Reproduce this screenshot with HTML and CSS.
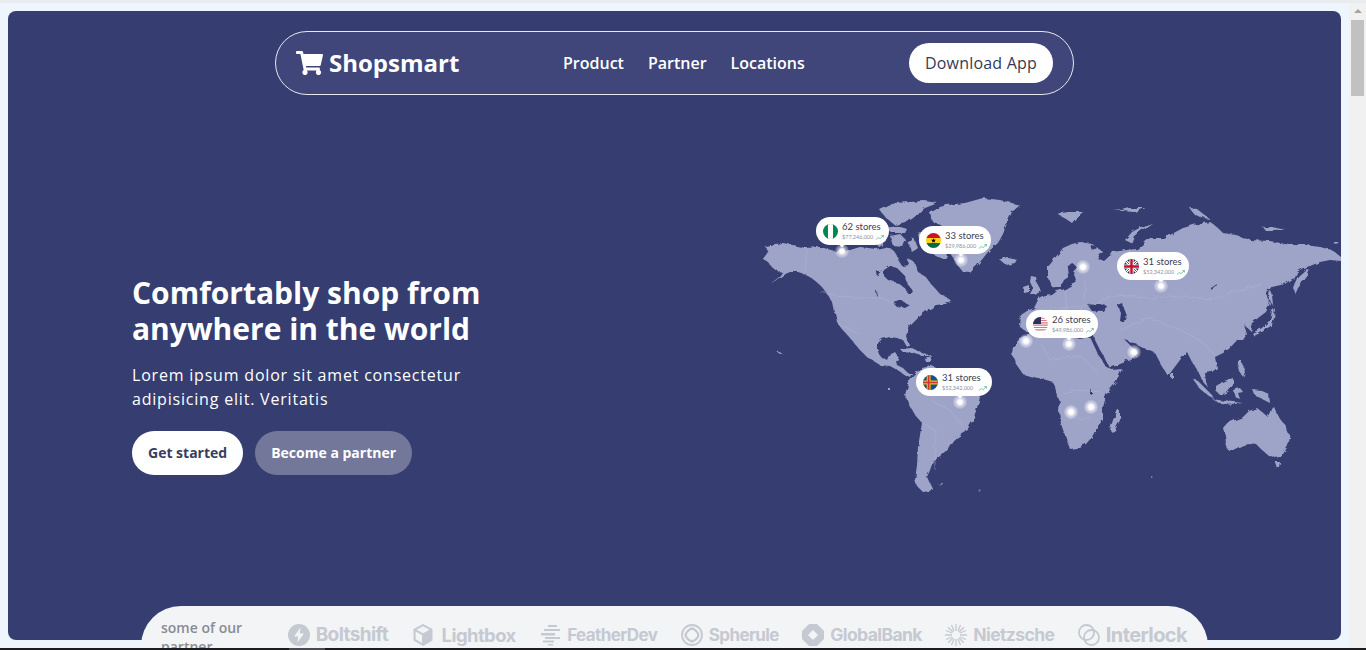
FILE: index.html
```html
<!DOCTYPE html>
<html lang="en">
<head>
    <title>Shopsmart</title>
    <meta charset="UTF-8">
    <meta name="viewport" content="width=device-width, initial-scale=1.0">
    <link rel="stylesheet" href="styles.css">
</head>
<body>
    <div class="page">
        <main class="hero">
            <nav class="navbar">
                <a href="#" class="logo">
                    <svg class="cart" viewBox="0 0 576 512"><path fill="#fff" d="M528.12 301.319l47.273-208C578.806 78.301 567.391 64 551.99 64H159.208l-9.166-44.81C147.758 8.021 137.93 0 126.529 0H24C10.745 0 0 10.745 0 24v16c0 13.255 10.745 24 24 24h69.883l70.248 343.435C147.325 417.1 136 435.222 136 456c0 30.928 25.072 56 56 56s56-25.072 56-56c0-15.674-6.447-29.835-16.824-40h209.647C430.447 426.165 424 440.326 424 456c0 30.928 25.072 56 56 56s56-25.072 56-56c0-22.172-12.888-41.332-31.579-50.405l5.517-24.276c3.413-15.018-8.002-29.319-23.403-29.319H218.117l-6.545-32h293.145c11.206 0 20.92-7.754 23.403-18.681z"/></svg>
                    <span>Shopsmart</span>
                </a>
                <div class="nav-links">
                    <a href="#">Product</a>
                    <a href="#">Partner</a>
                    <a href="#">Locations</a>
                </div>
                <a href="#" class="download">Download App</a>
            </nav>

            <section class="hero-body">
                <div class="hero-copy">
                    <h1>Comfortably shop from anywhere in the world</h1>
                    <p>Lorem ipsum dolor sit amet consectetur adipisicing elit. Veritatis</p>
                    <div class="hero-actions">
                        <a href="#" class="btn btn-white">Get started</a>
                        <a href="#" class="btn btn-muted">Become a partner</a>
                    </div>
                </div>

                <div class="map">
                    <svg class="world" viewBox="760 190 581 310" width="581" height="310">
                        <defs>
                            <filter id="coast" x="-2%" y="-2%" width="104%" height="104%">
                                <feTurbulence type="fractalNoise" baseFrequency="0.14" numOctaves="3" seed="7"/>
                                <feDisplacementMap in="SourceGraphic" scale="4.5"/>
                            </filter>
                        </defs>
                        <g class="coast">
                        <g class="land">
                            <!-- north america -->
                            <path d="M763 259L768 252 765 246 775 244 783 243 806 248 820 247 835 251 850 250 860 247 876 249 885 247 893 250 898 258 906 258 914 262 918 272 925 276 932 285 940 294 948 298 952 302 945 304 936 305 930 309 925 312 918 318 912 324 908 330 906 336 909 345 907 347 903 340 897 338 890 337 882 339 878 343 878 352 881 357 888 361 891 354 895 352 898 356 895 361 897 365 903 368 908 373 912 373 910 377 905 375 899 371 890 366 880 365 867 357 858 348 850 338 841 328 837 322 833 303 826 292 821 286 813 279 807 275 798 272 790 272 783 275 775 281 770 284 778 278 782 272 775 270 771 266 768 262Z"/>
                            <!-- greenland and arctic islands -->
                            <path d="M930 213L940 207 947 205 965 203 983 198 1000 200 1020 205 1012 212 1007 223 1003 234 998 243 988 252 980 262 970 273 963 272 958 266 950 253 948 244 945 233 940 224 933 222Z"/>
                            <path d="M880 210L895 203 925 201 938 203 925 208 915 215 905 222 895 225 885 217Z"/>
                            <path d="M917 233L926 231 935 235 942 244 948 256 946 260 936 256 926 248 921 241Z"/>
                            <path d="M885 228L897 226 907 229 905 233 892 233Z"/>
                            <path d="M890 236L900 234 906 240 903 247 893 246Z"/>
                            <path d="M873 238L884 234 886 241 878 246Z"/>
                            <path d="M907 241L914 238 918 248 912 252Z"/>
                            <!-- caribbean -->
                            <path d="M900 349L912 348 922 353 930 356 922 356 912 353 903 352Z"/>
                            <path d="M924 358L932 356 931 361 925 361Z"/>
                            <!-- south america -->
                            <path d="M905 395L908 385 913 375 922 368 932 366 945 372 958 378 970 385 980 397 977 408 973 420 966 432 953 440 947 450 940 456 933 462 930 470 927 477 932 488 930 491 923 492 917 486 915 480 917 465 918 447 920 435 922 423 916 416 910 407Z"/>
                            <!-- iceland, britain, ireland -->
                            <path d="M1000 260L1007 257 1017 259 1015 263 1006 265Z"/>
                            <path d="M1031 276L1036 277 1037 284 1041 291 1035 295 1030 294 1033 288 1030 282Z"/>
                            <path d="M1023 287L1029 285 1029 292 1024 293Z"/>
                            <!-- scandinavia and eurasia -->
                            <path d="M1048 267L1055 258 1063 248 1072 244 1080 242 1092 244 1103 252 1097 258 1104 261 1111 255 1113 252 1127 250 1137 249 1150 238 1163 238 1170 235 1183 228 1197 224 1210 222 1218 228 1223 233 1236 235 1250 240 1270 241 1290 245 1305 245 1320 247 1332 250 1341 257 1341 261 1330 260 1320 262 1310 266 1303 268 1297 272 1295 278 1290 280 1285 284 1272 287 1266 292 1270 303 1266 312 1258 318 1252 323 1250 330 1245 326 1243 322 1247 334 1243 340 1237 340 1230 348 1223 353 1215 357 1217 368 1212 372 1205 373 1206 382 1209 388 1203 382 1198 371 1192 362 1187 352 1180 360 1174 368 1168 376 1162 366 1155 353 1148 350 1142 347 1134 343 1125 340 1134 349 1138 353 1131 360 1120 364 1110 368 1106 360 1100 350 1095 340 1091 331 1082 328 1076 325 1068 322 1060 325 1052 320 1045 322 1040 330 1028 332 1020 327 1021 315 1027 311 1034 308 1038 300 1045 296 1052 295 1057 291 1065 289 1070 286 1073 279 1070 276 1064 280 1060 288 1052 287 1048 278Z"/>
                            <!-- africa -->
                            <path d="M1013 347L1020 338 1030 333 1046 331 1056 334 1068 336 1080 339 1090 337 1097 352 1105 366 1112 370 1122 369 1116 382 1106 395 1103 408 1103 420 1097 427 1092 437 1086 444 1076 448 1070 449 1066 438 1061 424 1059 412 1060 402 1055 390 1053 382 1043 379 1033 377 1023 374 1016 364 1012 354Z"/>
                            <path d="M1110 430L1113 420 1118 410 1120 410 1120 420 1115 430 1112 432Z"/>
                            <!-- australia -->
                            <path d="M1223 428L1226 424 1235 420 1243 417 1249 411 1257 408 1262 412 1268 417 1271 408 1273 406 1278 416 1285 425 1290 437 1288 446 1282 456 1276 458 1268 455 1262 450 1257 445 1250 444 1243 445 1235 449 1228 450 1226 443 1225 435Z"/>
                            <path d="M1275 462L1280 462 1279 467 1277 468Z"/>
                            <!-- south east asia -->
                            <path d="M1193 379L1198 381 1205 388 1212 395 1214 399 1208 395 1200 389Z"/>
                            <path d="M1212 399L1225 401 1243 403 1235 404 1220 403Z"/>
                            <path d="M1216 386L1224 381 1233 378 1233 385 1228 392 1220 395 1216 391Z"/>
                            <path d="M1233 390L1240 388 1243 392 1238 393 1240 399 1235 397Z"/>
                            <path d="M1253 390L1262 391 1269 394 1270 403 1262 399 1255 395Z"/>
                            <path d="M1237 360L1241 360 1245 372 1243 377 1240 372Z"/>
                            <path d="M1171 373L1174 373 1174 378 1171 378Z"/>
                            <!-- japan, kamchatka, sakhalin -->
                            <path d="M1252 333L1262 328 1270 320 1272 311 1275 308 1274 318 1272 325 1262 332 1254 336Z"/>
                            <path d="M1270 290L1272 295 1273 305 1271 303 1269 296Z"/>
                            <path d="M1294 285L1298 276 1306 269 1310 270 1306 278 1298 288 1295 295Z"/>
                            <!-- high arctic -->
                            <path d="M1125 240L1132 232 1143 226 1152 223 1142 230 1134 236 1131 243Z"/>
                            <path d="M1057 214L1068 212 1083 212 1076 218 1072 223 1066 219Z"/>
                            <path d="M1113 209L1122 210 1130 208 1146 208 1134 212 1122 211Z"/>
                            <path d="M1190 208L1197 209 1203 214 1210 219 1202 218 1194 214Z"/>
                            <path d="M1263 227L1272 227 1286 230 1275 231 1266 231Z"/>
                            <path d="M1332 242L1339 242 1336 244Z"/>
                            <!-- specks -->
                            <path d="M775 350L778 351 784 355 780 354Z"/>
                            <path d="M938 484L943 483 942 485Z"/>
                            <path d="M977 489L981 490 979 491Z"/>
                            <path d="M1151 477L1154 478 1152 479Z"/>
                            <path d="M888 388L890 388 890 390 888 390Z"/>
                        </g>
                        <g class="water">
                            <!-- hudson bay and inland seas -->
                            <path d="M884 270L890 266 897 268 905 276 908 284 913 292 908 294 905 288 898 283 888 280 884 276Z"/>
                            <path d="M897 258L906 258 910 265 902 266Z"/>
                            <path d="M876 272L882 270 877 276Z"/>
                            <path d="M876 291L877 291 878 297 877 296Z"/>
                            <path d="M892 302L900 300 910 305 905 308 896 306Z"/>
                            <path d="M1067 267L1072 263 1077 267 1073 272 1076 283 1070 286 1068 276Z"/>
                            <path d="M1087 304L1096 303 1107 306 1104 312 1092 311Z"/>
                            <path d="M1117 305L1122 303 1127 316 1125 323 1120 321 1121 313Z"/>
                            <path d="M1211 288L1217 284 1216 287 1212 291Z"/>
                            <path d="M1091 245L1098 247 1097 250 1090 249Z"/>
                            <path d="M1090 390L1092 389 1092 395 1090 394Z"/>
                        </g>
                        <g class="borders">
                            <path d="M806 248L806 272M820 292L850 298 880 298 895 303M838 324L860 334M1040 310L1060 308 1090 305 1115 295 1150 298 1185 296 1210 300 1238 290 1262 284M1065 290L1068 322M1085 280L1082 328M1120 330L1150 318 1180 330 1200 340 1215 355M1042 345L1050 360 1080 356 1098 372M1060 395L1080 390 1100 392M1064 420L1090 418M930 400L950 410 962 425M922 423L935 430 935 470"/>
                        </g>
                        </g>
                    </svg>

                    <div class="glow glow-a"></div>
                    <div class="glow glow-b"></div>
                    <div class="glow glow-c"></div>
                    <div class="glow glow-d"></div>
                    <div class="glow glow-e"></div>

                    <div class="pin pin-ng">
                        <svg class="flag" viewBox="0 0 16 16"><rect width="16" height="16" fill="#008751"/><rect x="5.3" width="5.4" height="16" fill="#fff"/></svg>
                        <div class="pin-text">
                            <b>62 stores</b>
                            <small>$77,246,000 <svg class="trend" viewBox="0 0 10 6"><path d="M0 5.5L3 3 5 4.5 9 1M6.5 .6H9.500V3"/></svg></small>
                        </div>
                    </div>
                    <div class="pin pin-gh">
                        <svg class="flag" viewBox="0 0 16 16"><rect width="16" height="5.400" fill="#ce1126"/><rect y="5.300" width="16" height="5.400" fill="#fcd116"/><rect y="10.700" width="16" height="5.300" fill="#006b3f"/><path d="M8 5.500L8.700 7.300 10.500 7.300 9.100 8.500 9.600 10.400 8 9.300 6.400 10.400 6.900 8.500 5.500 7.300 7.300 7.300Z"/></svg>
                        <div class="pin-text">
                            <b>33 stores</b>
                            <small>$29,986,000 <svg class="trend" viewBox="0 0 10 6"><path d="M0 5.5L3 3 5 4.5 9 1M6.5 .6H9.500V3"/></svg></small>
                        </div>
                    </div>
                    <div class="pin pin-uk">
                        <svg class="flag" viewBox="0 0 16 16"><rect width="16" height="16" fill="#2b2f5e"/><path d="M0 0L16 16M16 0L0 16" stroke="#fff" stroke-width="3"/><path d="M0 0L16 16M16 0L0 16" stroke="#c8102e" stroke-width="1"/><path d="M8 0V16M0 8H16" stroke="#fff" stroke-width="4.500"/><path d="M8 0V16M0 8H16" stroke="#c8102e" stroke-width="2.600"/></svg>
                        <div class="pin-text">
                            <b>31 stores</b>
                            <small>$52,342,000 <svg class="trend" viewBox="0 0 10 6"><path d="M0 5.5L3 3 5 4.5 9 1M6.5 .6H9.500V3"/></svg></small>
                        </div>
                    </div>
                    <div class="pin pin-us">
                        <svg class="flag" viewBox="0 0 16 16"><rect width="16" height="16" fill="#fff"/><path d="M0 1.200H16M0 3.700H16M0 6.200H16M0 8.700H16M0 11.200H16M0 13.700H16" stroke="#d9767f" stroke-width="1.200"/><rect width="8.500" height="7.500" fill="#27345f"/></svg>
                        <div class="pin-text">
                            <b>26 stores</b>
                            <small>$49,986,000 <svg class="trend" viewBox="0 0 10 6"><path d="M0 5.5L3 3 5 4.5 9 1M6.5 .6H9.500V3"/></svg></small>
                        </div>
                    </div>
                    <div class="pin pin-ax">
                        <svg class="flag" viewBox="0 0 16 16"><rect width="16" height="16" fill="#14508f"/><path d="M6 0V16M0 8H16" stroke="#f2c200" stroke-width="4.200"/><path d="M6 0V16M0 8H16" stroke="#d6332a" stroke-width="1.800"/></svg>
                        <div class="pin-text">
                            <b>31 stores</b>
                            <small>$52,342,000 &nbsp;<svg class="trend" viewBox="0 0 10 6"><path d="M0 5.5L3 3 5 4.5 9 1M6.5 .6H9.500V3"/></svg></small>
                        </div>
                    </div>
                </div>
            </section>

            <section class="partners">
                <div class="partners-label">some of our partner</div>
                <div class="partner-logos">
                    <div class="partner partner-bolt">
                        <svg viewBox="0 0 22 22"><circle cx="11" cy="11" r="11"/><path fill="#f3f4f6" d="M12.500 3.500L6 12.500H10.200L9.500 18.500 16 9.500H11.800Z"/></svg>
                        <span>Boltshift</span>
                    </div>
                    <div class="partner partner-light">
                        <svg viewBox="0 0 22 22"><path d="M11 0L20.500 5V16.500L11 22 1.500 16.500V5Z"/><path fill="#f3f4f6" d="M11 2.300L17.600 5.800 11 9.300 4.400 5.800ZM3.600 7.600L10 11V19L3.600 15.300Z"/></svg>
                        <span>Lightbox</span>
                    </div>
                    <div class="partner partner-feather">
                        <svg viewBox="0 0 22 22"><path d="M9 1H18V3H9ZM5 5H21V7H5ZM2 9H16V11.500H2ZM6 13H21V15H6ZM4 16.500H15V18.500H4ZM9 20H14V21.500H9Z"/></svg>
                        <span>FeatherDev</span>
                    </div>
                    <div class="partner partner-sphere">
                        <svg viewBox="0 0 22 22"><g class="ring"><circle cx="11" cy="11" r="10"/><rect x="5.500" y="5.500" width="11" height="11" rx="3" transform="rotate(45 11 11)"/><circle cx="11" cy="11" r="6"/></g></svg>
                        <span>Spherule</span>
                    </div>
                    <div class="partner partner-bank">
                        <svg viewBox="0 0 22 22"><path d="M7 0H15L22 7V15L15 22H7L0 15V7Z"/><path fill="#f3f4f6" d="M11 6L16 11 11 16 6 11Z"/></svg>
                        <span>GlobalBank</span>
                    </div>
                    <div class="partner partner-nietzsche">
                        <svg viewBox="0 0 22 22"><g class="ring ring-thick"><path d="M11 0V7M11 15V22M0 11H7M15 11H22M3.200 3.200L8.200 8.200M13.800 13.800L18.800 18.800M18.800 3.200L13.800 8.200M8.200 13.800L3.200 18.800M6.500 1L9 7M13 15L15.500 21M15.500 1L13 7M9 15L6.500 21M1 6.500L7 9M15 13L21 15.500M21 6.500L15 9M7 13L1 15.500"/></g></svg>
                        <span>Nietzsche</span>
                    </div>
                    <div class="partner partner-inter">
                        <svg viewBox="0 0 22 22"><g class="ring"><circle cx="8.500" cy="8.500" r="7.500"/><circle cx="13.500" cy="13.500" r="7.500"/></g></svg>
                        <span>Interlock</span>
                    </div>
                </div>
            </section>
        </main>

        <div class="scrollbar">
            <div class="scroll-up"></div>
            <div class="scroll-thumb"></div>
        </div>
    </div>
    <div class="taskbar"><div class="taskbar-item"></div></div>
</body>
</html>
```

FILE: styles.css
```css
html, body {
    margin: 0;
    height: 100%;
    overflow: hidden;
}
body {
    font-family: "Open Sans", sans-serif;
    background-color: #eff5fd;
    color: #fff;
}
a {
    text-decoration: none;
    color: inherit;
}
.page {
    display: flex;
    height: 650px;
    box-sizing: border-box;
    border-top: 3px solid #e9ebef;
}
.hero {
    flex: 1;
    height: 629px;
    margin: 8px 8px 0;
    background-color: #363d70;
    border-radius: 8px;
    display: flex;
    flex-direction: column;
    align-items: center;
}
.navbar {
    flex: none;
    width: 799px;
    height: 64px;
    margin-top: 20px;
    box-sizing: border-box;
    padding: 0 20px;
    display: flex;
    align-items: center;
    border: 1px solid #e6e8f2;
    border-radius: 32px;
    background-color: #40467a;
}
.logo {
    display: flex;
    align-items: center;
    gap: 6px;
    width: 267px;
    font-size: 24px;
    line-height: 30px;
    font-weight: 700;
}
.logo span {
    margin-top: -1px;
}
.cart {
    width: 27px;
    height: 24px;
}
.nav-links {
    display: flex;
    gap: 24px;
    font-size: 16px;
    font-weight: 600;
}
.download {
    margin-left: auto;
    width: 144px;
    height: 40px;
    line-height: 40px;
    text-align: center;
    background-color: #fff;
    color: #373a55;
    border-radius: 20px;
    font-size: 16px;
    font-weight: 500;
    letter-spacing: 0.2px;
}
.hero-body {
    flex: none;
    width: 100%;
    height: 310px;
    margin-top: 95px;
    box-sizing: border-box;
    padding-left: 124px;
    display: flex;
    justify-content: space-between;
}
.hero-copy {
    width: 370px;
    margin-top: 85px;
}
.hero-copy h1 {
    margin: 0;
    font-size: 30px;
    line-height: 36px;
    font-weight: 700;
}
.hero-copy p {
    margin: 16px 0 0;
    font-size: 16px;
    line-height: 24px;
    letter-spacing: 0.8px;
}
.hero-actions {
    display: flex;
    gap: 12px;
    margin-top: 20px;
}
.btn {
    height: 44px;
    line-height: 44px;
    padding: 0 16px;
    border-radius: 22px;
    font-size: 14px;
    font-weight: 700;
}
.btn-white {
    background-color: #fff;
    color: #373e5f;
}
.btn-muted {
    background-color: #737799;
}
.map {
    position: relative;
    flex: none;
    width: 581px;
    height: 310px;
}
.world {
    display: block;
}
.coast {
    filter: url(#coast);
}
.land path {
    fill: #9ea3c8;
}
.water path {
    fill: #363d70;
}
.borders path {
    fill: none;
    stroke: #b3b7d6;
    stroke-width: 0.5;
}
.glow {
    position: absolute;
    width: 14px;
    height: 14px;
    border-radius: 50%;
    background: radial-gradient(circle, #fff 22%, rgba(255, 255, 255, 0.5) 45%, rgba(255, 255, 255, 0.1) 75%, rgba(255, 255, 255, 0) 100%);
}
.glow-a { left: 316px; top: 70px; }
.glow-b { left: 259px; top: 144px; }
.glow-c { left: 367px; top: 155px; }
.glow-d { left: 304px; top: 215px; }
.glow-e { left: 324px; top: 210px; }
.pin {
    position: absolute;
    display: flex;
    align-items: center;
    gap: 4px;
    height: 28px;
    box-sizing: border-box;
    padding-left: 7px;
    background-color: #fff;
    border-radius: 14px;
    color: #3b3f4f;
    font-family: Lato, sans-serif;
}
.pin::before {
    content: "";
    position: absolute;
    top: 26px;
    left: var(--dot);
    width: 4px;
    height: 4px;
    margin-left: -2px;
    background-color: #fff;
    border-radius: 0 0 2px 2px;
}
.pin::after {
    content: "";
    position: absolute;
    top: 27px;
    left: var(--dot);
    width: 14px;
    height: 14px;
    margin-left: -7px;
    border-radius: 50%;
    background: radial-gradient(circle, #fff 20%, rgba(255, 255, 255, 0.45) 45%, rgba(255, 255, 255, 0.1) 75%, rgba(255, 255, 255, 0) 100%);
}
.pin-ng { left: 56px; top: 27px; width: 73px; --dot: 26px; }
.pin-gh { left: 159px; top: 36px; width: 72px; --dot: 42px; }
.pin-uk { left: 357px; top: 62px; width: 72px; --dot: 44px; }
.pin-us { left: 266px; top: 120px; width: 72px; --dot: 43px; }
.pin-ax { left: 156px; top: 178px; width: 76px; --dot: 44px; }
.flag {
    flex: none;
    width: 15px;
    height: 15px;
    border-radius: 50%;
}
.pin-text {
    display: flex;
    flex-direction: column;
    white-space: nowrap;
}
.pin-text b {
    font-size: 9.500px;
    line-height: 12px;
    font-weight: 400;
}
.pin-text small {
    display: flex;
    align-items: center;
    gap: 3px;
    font-size: 5.500px;
    line-height: 8px;
    color: #8d90a0;
}
.trend {
    width: 8px;
    height: 5px;
}
.trend path {
    fill: none;
    stroke: #3fa877;
    stroke-width: 0.8;
}
.partners {
    flex: none;
    width: 1067px;
    height: 42px;
    margin-top: 106px;
    box-sizing: border-box;
    padding: 12px 21px 0 20px;
    background-color: #f3f4f6;
    border-radius: 40px 40px 0 0;
    color: #878c96;
    display: flex;
    justify-content: space-between;
    align-items: flex-start;
    overflow: hidden;
}
.partners-label {
    width: 100px;
    font-size: 14px;
    line-height: 19px;
    font-weight: 600;
}
.partner-logos {
    display: flex;
    gap: 23.500px;
    margin-top: 4px;
}
.partner {
    display: flex;
    align-items: center;
    gap: 6px;
    color: #c5c9d1;
    font-family: Inter, sans-serif;
    font-size: 18px;
    line-height: 26px;
    font-weight: 700;
    letter-spacing: -0.6px;
}
.partner-bolt { font-size: 19px; }
.partner-light { font-size: 18.500px; gap: 8px; }
.partner-feather { font-size: 17px; }
.partner-sphere { font-size: 17px; }
.partner-bank { font-size: 17.500px; }
.partner-nietzsche { font-size: 17.500px; }
.partner-inter { font-size: 20px; }
.partner svg {
    width: 22px;
    height: 22px;
    fill: #c5c9d1;
}
.ring {
    fill: none;
    stroke: #c5c9d1;
    stroke-width: 1.800;
}
.ring-thick {
    stroke-width: 1.300;
}
.scrollbar {
    flex: none;
    width: 17px;
    height: 100%;
    background-color: #f1f1f1;
}
.scroll-up {
    width: 0;
    height: 0;
    margin: 6px auto 0;
    border: 4px solid transparent;
    border-top: 0;
    border-bottom: 4px solid #a3a3a3;
}
.scroll-thumb {
    width: 13px;
    height: 76px;
    margin: 7px auto 0;
    background-color: #c1c1c1;
}
.taskbar {
    position: fixed;
    left: 0;
    right: 0;
    bottom: 0;
    height: 2px;
    background-color: #1c1c20;
}
.taskbar-item {
    width: 36px;
    height: 2px;
    margin-left: 289px;
    background-color: #4a4a50;
}
```
